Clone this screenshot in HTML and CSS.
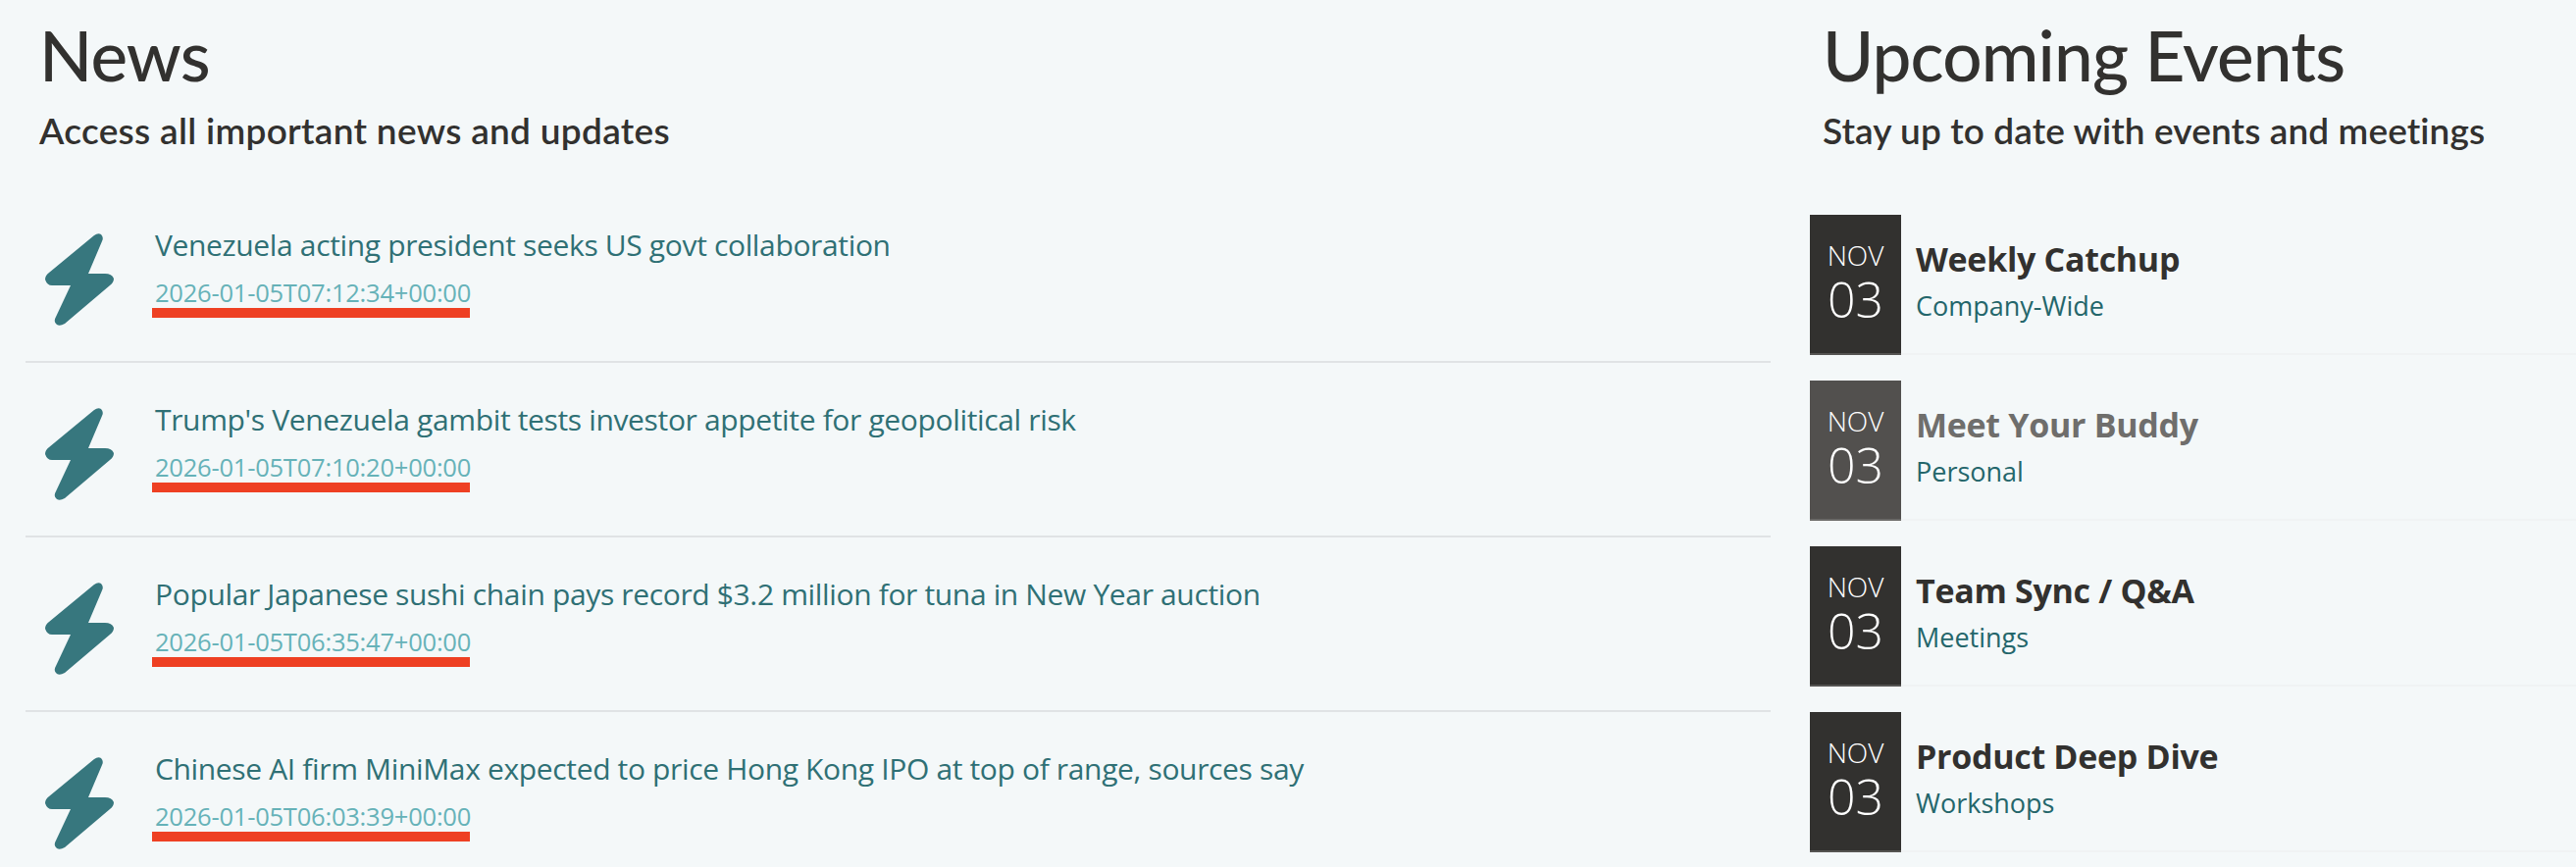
FILE: index.html
```html
<!DOCTYPE html>
<html lang="en">
<head>
<meta charset="utf-8">
<title>News and Upcoming Events</title>
<link rel="stylesheet" href="styles.css">
</head>
<body>
<main class="page">
  <section class="news">
    <header class="head head-news">
      <h1>News</h1>
      <h2>Access all important news and updates</h2>
    </header>
    <ul class="news-list">
      <li class="news-item">
        <svg class="bolt" viewBox="0 0 70 94"><path d="M50 2Q54-1 57 1Q60 4 58 8L44 41H61Q68 41 70 46Q70 50 66 53L20 92Q15 95 12 93Q8 90 11 85L26 53H7Q2 53 0 47Q0 43 4 40Z"/></svg>
        <div class="news-text">
          <a class="news-title">Venezuela acting president seeks US govt collaboration</a>
          <time class="news-date">2026-01-05T07:12:34+00:00</time>
          <span class="redline"></span>
        </div>
      </li>
      <li class="news-item">
        <svg class="bolt" viewBox="0 0 70 94"><path d="M50 2Q54-1 57 1Q60 4 58 8L44 41H61Q68 41 70 46Q70 50 66 53L20 92Q15 95 12 93Q8 90 11 85L26 53H7Q2 53 0 47Q0 43 4 40Z"/></svg>
        <div class="news-text">
          <a class="news-title">Trump's Venezuela gambit tests investor appetite for geopolitical risk</a>
          <time class="news-date">2026-01-05T07:10:20+00:00</time>
          <span class="redline"></span>
        </div>
      </li>
      <li class="news-item">
        <svg class="bolt" viewBox="0 0 70 94"><path d="M50 2Q54-1 57 1Q60 4 58 8L44 41H61Q68 41 70 46Q70 50 66 53L20 92Q15 95 12 93Q8 90 11 85L26 53H7Q2 53 0 47Q0 43 4 40Z"/></svg>
        <div class="news-text">
          <a class="news-title">Popular Japanese sushi chain pays record $3.2 million for tuna in New Year auction</a>
          <time class="news-date">2026-01-05T06:35:47+00:00</time>
          <span class="redline"></span>
        </div>
      </li>
      <li class="news-item news-item-last">
        <svg class="bolt" viewBox="0 0 70 94"><path d="M50 2Q54-1 57 1Q60 4 58 8L44 41H61Q68 41 70 46Q70 50 66 53L20 92Q15 95 12 93Q8 90 11 85L26 53H7Q2 53 0 47Q0 43 4 40Z"/></svg>
        <div class="news-text">
          <a class="news-title">Chinese AI firm MiniMax expected to price Hong Kong IPO at top of range, sources say</a>
          <time class="news-date">2026-01-05T06:03:39+00:00</time>
          <span class="redline"></span>
        </div>
      </li>
    </ul>
  </section>
  <section class="events">
    <header class="head head-events">
      <h1>Upcoming Events</h1>
      <h2>Stay up to date with events and meetings</h2>
    </header>
    <ul class="event-list">
      <li class="event">
        <div class="cal"><span class="cal-month">NOV</span><span class="cal-day">03</span></div>
        <div class="event-text"><strong class="event-title">Weekly Catchup</strong><span class="event-sub">Company-Wide</span></div>
      </li>
      <li class="event event-muted">
        <div class="cal"><span class="cal-month">NOV</span><span class="cal-day">03</span></div>
        <div class="event-text"><strong class="event-title">Meet Your Buddy</strong><span class="event-sub">Personal</span></div>
      </li>
      <li class="event">
        <div class="cal"><span class="cal-month">NOV</span><span class="cal-day">03</span></div>
        <div class="event-text"><strong class="event-title">Team Sync / Q&amp;A</strong><span class="event-sub">Meetings</span></div>
      </li>
      <li class="event">
        <div class="cal"><span class="cal-month">NOV</span><span class="cal-day">03</span></div>
        <div class="event-text"><strong class="event-title">Product Deep Dive</strong><span class="event-sub">Workshops</span></div>
      </li>
    </ul>
  </section>
</main>
</body>
</html>
```
FILE: styles.css
```css
* { box-sizing: border-box; }
html, body { margin: 0; padding: 0; height: 884px; overflow: hidden; }
body { background: #f4f8f9; font-family: "Open Sans", "Noto Sans", sans-serif; color: #32312f; }
ul { list-style: none; margin: 0; padding: 0; }
.page { display: grid; grid-template-columns: 1779px 781px; column-gap: 40px; padding-left: 26px; }

.head { padding-top: 13px; font-family: Lato, sans-serif; }
.head-news { height: 192px; padding-left: 14px; }
.head-events { height: 219px; padding-left: 13px; }
.head h1 { margin: 0; font-size: 71px; line-height: 86px; font-weight: 500; letter-spacing: -0.8px; }
.head h2 { margin: 12px 0 0; font-size: 37px; line-height: 44px; font-weight: 600; letter-spacing: 0.3px; }
.head-events h2 { letter-spacing: 0.1px; }

.news-item { display: flex; height: 178px; border-bottom: 2px solid #e0e3e5; padding: 46px 0 0 20px; }
.news-item-last { height: 168px; border-bottom: 0; }
.bolt { width: 70px; height: 94px; flex: none; fill: #37777e; }
.news-text { margin-left: 42px; display: flex; flex-direction: column; align-items: flex-start; margin-top: -9px; }
.news-title { font-size: 30px; line-height: 42px; letter-spacing: -0.35px; color: #2f7075; }
.news-date { font-size: 25.5px; line-height: 36px; margin-top: 9px; letter-spacing: -0.22px; color: #66b2b8; }
.redline { display: block; width: 324px; height: 10px; margin-left: -3px; margin-top: -2px; background: #ee4023; }

.event-list { display: flex; flex-direction: column; gap: 26px; }
.event { display: flex; height: 143px; border-bottom: 2px solid #f0f3f4; }
.cal { width: 93px; height: 143px; flex: none; background: #32312f; border-bottom: 2px solid #555452; color: #fff; display: flex; flex-direction: column; align-items: center; padding-top: 23px; font-weight: 300; }
.cal-month { font-size: 28px; line-height: 36px; }
.cal-day { font-size: 50px; line-height: 54px; }
.event-text { margin-left: 15px; display: flex; flex-direction: column; align-items: flex-start; padding-top: 21px; }
.event-title { font-size: 34px; line-height: 48px; font-weight: 700; letter-spacing: -0.3px; color: #32312f; }
.event-sub { font-size: 27px; line-height: 38px; margin-top: 5px; color: #24666b; }
.event-muted .cal { background: #52504e; border-bottom-color: #6a6967; }
.event-muted .event-title { color: #6f6e6c; }
```
